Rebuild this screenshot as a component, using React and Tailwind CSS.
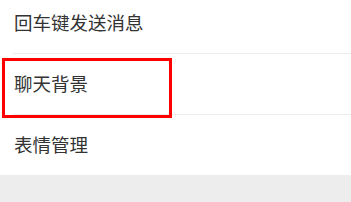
import React from "react";

const items = ["回车键发送消息", "聊天背景", "表情管理"];

export default function App() {
  return (
    <div
      className="relative w-[351px] h-[202px] overflow-hidden bg-white"
      style={{ fontFamily: '"Noto Sans CJK SC", "Noto Sans", sans-serif' }}
    >
      <div className="mt-[-7px] bg-white">
        {items.map((t, i) => (
          <div key={t}>
            <div className="h-[60px] flex items-center pl-[14px] text-[18.5px] text-[#333333]">
              {t}
            </div>
            {i < items.length - 1 && <div className="ml-[13px] h-px bg-[#ececec]" />}
          </div>
        ))}
      </div>
      <div className="h-[40px] bg-[#ededed]" />
      <div className="absolute left-[2px] top-[58px] w-[170px] h-[60px] border-[3px] border-[#ff0000]" />
    </div>
  );
}
